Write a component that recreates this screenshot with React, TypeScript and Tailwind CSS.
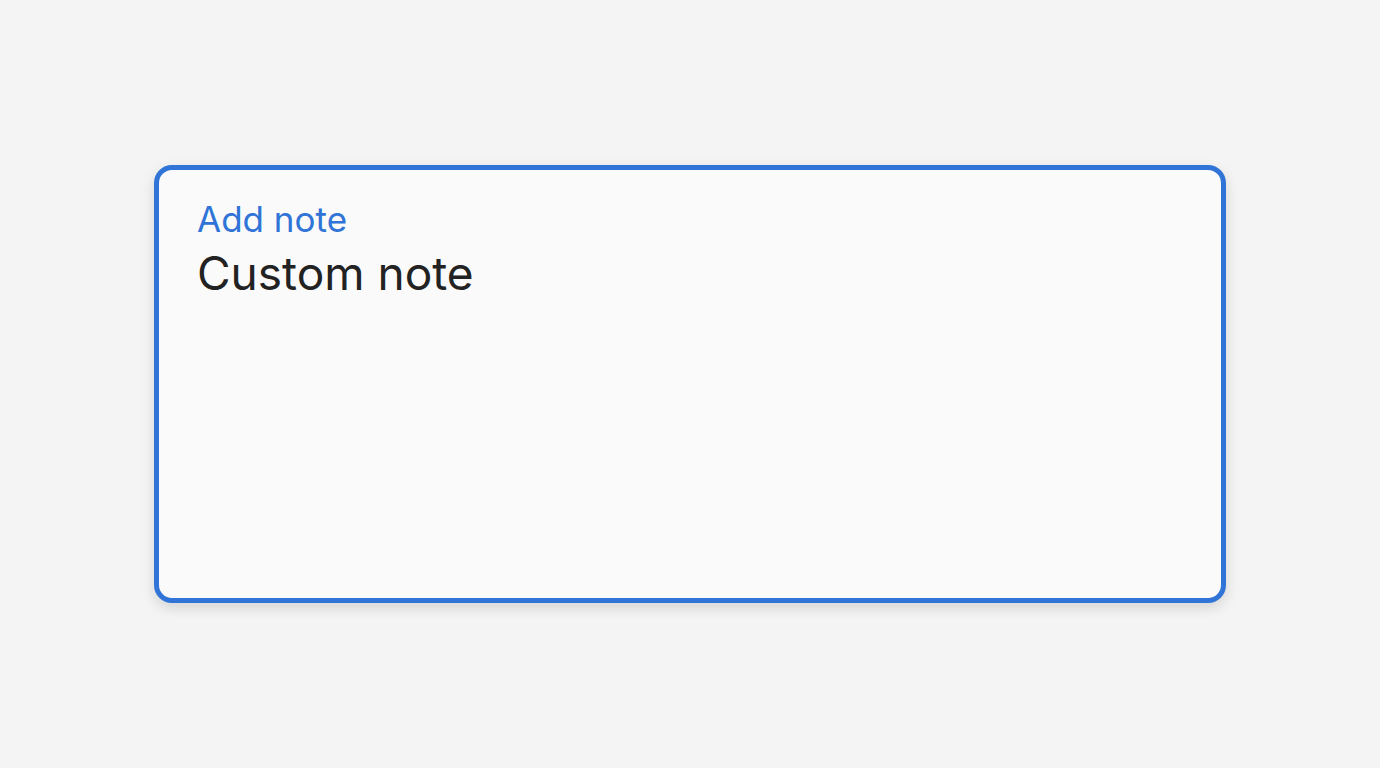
import React from 'react';

export default function App() {
  return (
    <div
      className="flex h-[768px] w-full items-center justify-center bg-[#f4f4f4]"
      style={{ fontFamily: 'Inter, "Noto Sans", sans-serif' }}
    >
      <div className="h-[438px] w-[1072px] rounded-[18px] border-[5px] border-[#2f74d6] bg-[#fafafa] px-[38px] pt-[28px] shadow-[0_5px_14px_rgba(0,0,0,0.13)]">
        <div className="text-[35px] leading-[42px] text-[#2f74d6]">Add note</div>
        <div className="mt-[5px] text-[46px] leading-[56px] text-[#222222]">Custom note</div>
      </div>
    </div>
  );
}
